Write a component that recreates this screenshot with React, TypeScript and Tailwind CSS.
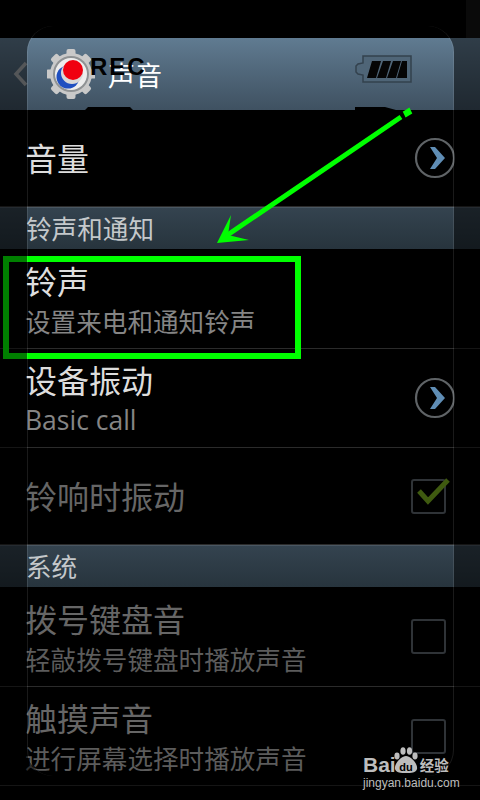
const CJK = "font-['Noto_Sans_CJK_SC','Noto_Sans',sans-serif]";

function Chevron() {
  return (
    <svg width="42" height="42" viewBox="0 0 42 42" className="shrink-0">
      <circle cx="21" cy="21" r="19" fill="none" stroke="#5f6366" strokeWidth="2.2" />
      <path d="M16 10 L21 10 L31 21 L21 32 L16 32 L23 21 Z" fill="#5f8db5" />
    </svg>
  );
}

function Box({ checked }: { checked?: boolean }) {
  return (
    <div className="relative mr-[10px] h-[35px] w-[35px] rounded-[3px] border-2 border-[#2f3337]">
      {checked && (
        <svg width="44" height="34" viewBox="0 0 44 34" className="absolute left-[3px] top-[-3px]">
          <path d="M3 13 L12 23 L32 2" fill="none" stroke="#3f5a10" strokeWidth="5" />
        </svg>
      )}
    </div>
  );
}

function Section({ label }: { label: string }) {
  return (
    <div className="flex h-[42px] items-center border-t border-[#4a5762] bg-gradient-to-b from-[#34434f] to-[#27343d] pb-[2px] pl-[26px] text-[25.6px] leading-none text-[#c4c8cb]">
      {label}
    </div>
  );
}

function Row({
  title,
  sub,
  dim,
  right,
  latin,
  height = "h-[99px]",
}: {
  title: string;
  sub?: string;
  dim?: boolean;
  right?: React.ReactNode;
  latin?: boolean;
  height?: string;
}) {
  return (
    <div className={`flex items-center justify-between border-b border-[#2b2b2b] pl-[26px] pr-[24px] ${height}`}>
      <div className={`ml-[-1px] flex flex-col gap-[4px] ${sub ? "" : "mb-[3px]"}`}>
        <div className={`text-[32px] leading-[40px] ${dim ? "text-[#666666]" : "text-[#dddddd]"}`}>{title}</div>
        {sub && (
          <div
            className={`${dim ? "text-[#5c5c5c]" : "text-[#858585]"} ${
              latin ? "font-['Open_Sans',sans-serif] text-[26.5px] leading-[34px]" : "text-[25.6px] leading-[34px]"
            }`}
          >
            {sub}
          </div>
        )}
      </div>
      {right}
    </div>
  );
}

function Logo() {
  return (
    <svg width="48" height="50" viewBox="0 0 48 50" className="shrink-0">
      <g fill="#c9c9c9">
        <circle cx="24" cy="25" r="21" />
        {[0, 45, 90, 135, 180, 225, 270, 315].map((a) => (
          <rect key={a} x="19.5" y="0" width="9" height="8" rx="2" transform={`rotate(${a} 24 25)`} />
        ))}
      </g>
      <circle cx="24" cy="25" r="18" fill="#8f9294" />
      <circle cx="24" cy="25" r="16" fill="#ededed" />
      <circle cx="21" cy="28" r="11.5" fill="#1f4fc0" />
      <circle cx="25" cy="24" r="11" fill="#d8d8d8" />
      <circle cx="26" cy="21" r="10" fill="#f00010" />
    </svg>
  );
}

function Battery() {
  return (
    <svg width="58" height="28" viewBox="0 0 58 28" className="mb-[10px] shrink-0">
      <path
        d="M9 1 H57 V27 H9 V20 L4 19 L2 17 V11 L4 9 L9 8 Z"
        fill="#4f6577"
        stroke="#33414d"
        strokeWidth="1.5"
      />
      <path d="M18 6 H27 L22 23 H13 Z M29 6 H37 L32 23 H23 Z M39 6 H47 L42 23 H33 Z M48 6 H53 V23 H43 Z" fill="#050505" />
    </svg>
  );
}

function Watermark() {
  return (
    <div className="absolute left-[363px] top-[747px] flex w-[90px] flex-col items-start text-[#bdbdbd]">
      <div className="flex h-[27px] items-end">
        <span className="font-['Liberation_Sans',sans-serif] text-[21px] font-bold leading-[19px]">Bai</span>
        <svg width="26" height="27" viewBox="0 0 26 27" className="ml-[-3px] shrink-0">
          <g fill="#bdbdbd">
            <ellipse cx="4" cy="9" rx="2.6" ry="3.4" />
            <ellipse cx="10" cy="4" rx="2.6" ry="3.8" />
            <ellipse cx="16.5" cy="4" rx="2.6" ry="3.8" />
            <ellipse cx="22" cy="9" rx="2.6" ry="3.4" />
            <path d="M13 9 C18 9 25 17 24 22 C23 26 18 26 13 26 C8 26 3 26 2 22 C1 17 8 9 13 9 Z" />
          </g>
          <text x="13" y="24" textAnchor="middle" fontSize="11" fontWeight="700" fontFamily="Liberation Sans" fill="#000">
            du
          </text>
        </svg>
        <span className="ml-[1px] text-[14.5px] font-bold leading-[19px]">经验</span>
      </div>
      <div className="mt-[3px] whitespace-nowrap font-['Liberation_Sans',sans-serif] text-[12px] leading-[12px]">jingyan.baidu.com</div>
    </div>
  );
}

export default function App() {
  return (
    <div className={`relative h-[800px] w-[480px] overflow-hidden bg-black ${CJK}`}>
      <div className="h-[38px]" />

      {/* title bar */}
      <div className="flex h-[72px] items-center bg-gradient-to-b from-[#607b91] to-[#3f5161] pl-[12px] pr-[68px]">
        <svg width="18" height="28" viewBox="0 0 18 28" className="shrink-0">
          <path d="M14 3 L4 14 L14 25" fill="none" stroke="#a8adb0" strokeWidth="3.5" />
        </svg>
        <div className="relative ml-[17px] flex items-center">
          <Logo />
          <span className="absolute left-[43px] top-[6px] z-10 font-['Liberation_Sans',sans-serif] text-[24px] font-bold leading-[24px] tracking-[2px] text-black">
            REC
          </span>
          <span className="ml-[13px] text-[27px] leading-none text-white">声音</span>
        </div>
        <div className="flex-1" />
        <Battery />
      </div>

      <Row title="音量" right={<Chevron />} height="h-[97px]" />
      <Section label="铃声和通知" />
      <Row title="铃声" sub="设置来电和通知铃声" height="h-[100px]" />
      <Row title="设备振动" sub="Basic call" latin right={<Chevron />} />
      <Row title="铃响时振动" dim right={<Box checked />} height="h-[97px]" />
      <Section label="系统" />
      <Row title="拨号键盘音" sub="轻敲拨号键盘时播放声音" dim right={<Box />} height="h-[100px]" />
      <Row title="触摸声音" sub="进行屏幕选择时播放声音" dim right={<Box />} />

      {/* annotation: green box and arrow */}
      <div className="absolute left-[3px] top-[256px] h-[103px] w-[298px] border-[6px] border-[#00ff00]" />
      <svg width="480" height="260" viewBox="0 0 480 260" className="absolute left-0 top-0">
        <path d="M85 110 L88 107 H130 L133 110 Z M355 110 V107 H385 L396 110 Z" fill="#000" />
        <path d="M401 117 L226 236" stroke="#00ff00" strokeWidth="5" />
        <path d="M404 112 L409 109 L411 113 L406 116 Z" fill="#00ff00" stroke="#00ff00" strokeWidth="2" />
        <path d="M217 243 L231 215 L228 235 L249 240 Z" fill="#00ff00" />
      </svg>

      {/* recorder frame: dims everything around it */}
      <div className="absolute left-[27px] top-[26px] h-[750px] w-[427px] rounded-[26px] border-x border-white/10 shadow-[0_0_0_500px_rgba(0,0,0,0.5)]" />

      <div className="absolute right-0 top-0 h-[38px] w-[14px] bg-[#0a0a0a]" />
      <Watermark />
    </div>
  );
}
